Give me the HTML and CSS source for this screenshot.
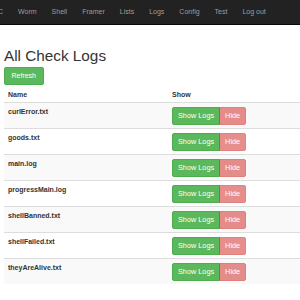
FILE: index.html
```html
<!DOCTYPE html>
<html lang="en">
<head>
    <meta charset="UTF-8">
    <meta name="viewport" content="width=device-width, initial-scale=1.0">
    <title>All Check Logs</title>
    <link rel="stylesheet" href="styles.css">
</head>
<body>

    <nav class="navbar">
        <ul class="nav">
            <li class="cut">C</li>
            <li>Worm</li>
            <li>Shell</li>
            <li>Framer</li>
            <li>Lists</li>
            <li>Logs</li>
            <li>Config</li>
            <li>Test</li>
            <li>Log out</li>
        </ul>
    </nav>

    <div class="container">
        <h1>All Check Logs</h1>
        <button class="btn btn-success">Refresh</button>

        <table class="table">
            <thead>
                <tr>
                    <th class="col-name">Name</th>
                    <th>Show</th>
                </tr>
            </thead>
            <tbody>
                <tr>
                    <td>curlError.txt</td>
                    <td><div class="btn-group"><button class="btn btn-success">Show Logs</button><button class="btn btn-danger" disabled>Hide</button></div></td>
                </tr>
                <tr>
                    <td>goods.txt</td>
                    <td><div class="btn-group"><button class="btn btn-success">Show Logs</button><button class="btn btn-danger" disabled>Hide</button></div></td>
                </tr>
                <tr>
                    <td>main.log</td>
                    <td><div class="btn-group"><button class="btn btn-success">Show Logs</button><button class="btn btn-danger" disabled>Hide</button></div></td>
                </tr>
                <tr>
                    <td>progressMain.log</td>
                    <td><div class="btn-group"><button class="btn btn-success">Show Logs</button><button class="btn btn-danger" disabled>Hide</button></div></td>
                </tr>
                <tr>
                    <td>shellBanned.txt</td>
                    <td><div class="btn-group"><button class="btn btn-success">Show Logs</button><button class="btn btn-danger" disabled>Hide</button></div></td>
                </tr>
                <tr>
                    <td>shellFailed.txt</td>
                    <td><div class="btn-group"><button class="btn btn-success">Show Logs</button><button class="btn btn-danger" disabled>Hide</button></div></td>
                </tr>
                <tr>
                    <td>theyAreAlive.txt</td>
                    <td><div class="btn-group"><button class="btn btn-success">Show Logs</button><button class="btn btn-danger" disabled>Hide</button></div></td>
                </tr>
            </tbody>
        </table>
    </div>

</body>
</html>
```

FILE: styles.css
```css
body {
    margin: 0;
    font-family: "Liberation Sans", Arial, sans-serif;
    font-size: 7px;
    line-height: 1.42857;
    color: #333;
    background: #fff;
    overflow: hidden;
}

/* barre de navigation */
.navbar {
    height: 25px;
    background: #222;
    border-bottom: 1px solid #080808;
    box-sizing: border-box;
}

.nav {
    display: flex;
    margin: 0 0 0 -2px;
    padding: 0;
    list-style: none;
}

.nav li {
    padding: 0 7.5px;
    line-height: 24px;
    color: #9d9d9d;
    white-space: nowrap;
}

.nav li.cut {
    padding-left: 0;
}

.container {
    padding: 0 0 0 4px;
}

h1 {
    margin: 23px 0 2px;
    font-size: 15.3px;
    font-weight: 500;
    line-height: 1.1;
}

.btn {
    display: inline-block;
    font-family: inherit;
    font-size: 7px;
    line-height: 10px;
    padding: 3px 6.5px;
    border: 1px solid transparent;
    border-radius: 2px;
    color: #fff;
    cursor: pointer;
    vertical-align: middle;
}

.btn-success {
    background-color: #5cb85c;
    border-color: #4cae4c;
}

.btn-danger {
    background-color: #d9534f;
    border-color: #d43f3a;
}

.btn[disabled] {
    opacity: 0.65;
    cursor: not-allowed;
}

.btn-group {
    display: inline-flex;
}

.btn-group .btn {
    height: 18px;
    font-size: 7.3px;
    padding: 3px 5px;
}

.btn-group .btn:first-child {
    border-top-right-radius: 0;
    border-bottom-right-radius: 0;
}

.btn-group .btn:last-child {
    border-top-left-radius: 0;
    border-bottom-left-radius: 0;
    margin-left: -1px;
}

.table {
    width: 100%;
    margin-top: 4px;
    border-collapse: collapse;
    border-spacing: 0;
}

.table th {
    text-align: left;
    font-weight: bold;
    padding: 1px 4px 2px;
    border-bottom: 1px solid #ddd;
    vertical-align: bottom;
}

.col-name {
    width: 156px;
}

.table td {
    padding: 4px 4px 3px;
    border-top: 1px solid #ddd;
    vertical-align: top;
    font-weight: bold;
}

.table tbody tr:nth-child(odd) {
    background-color: #f9f9f9;
}
```
